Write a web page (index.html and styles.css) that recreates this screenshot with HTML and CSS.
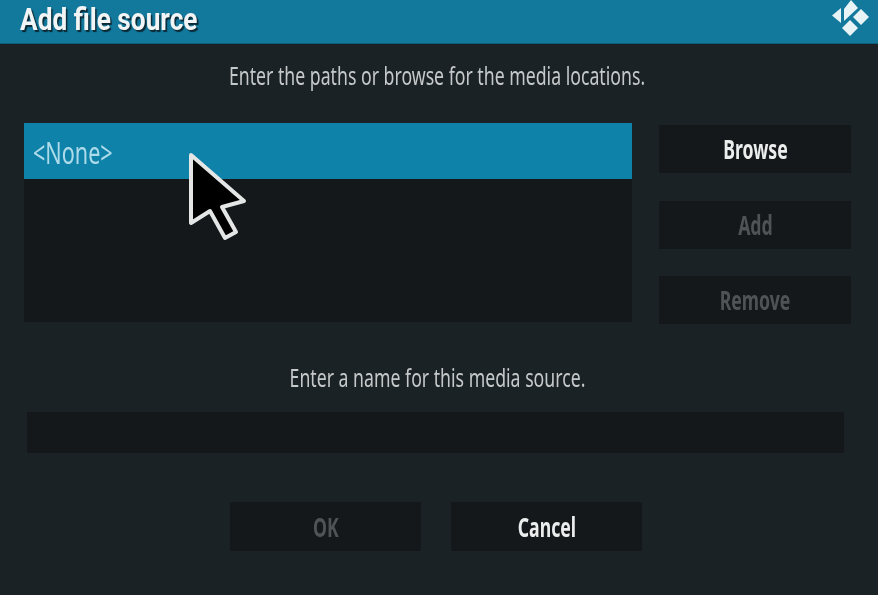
FILE: index.html
```html
<!DOCTYPE html>
<html lang="en">
<head>
    <meta charset="UTF-8">
    <meta name="viewport" content="width=device-width, initial-scale=1.0">
    <title>Add file source</title>
    <link rel="stylesheet" href="styles.css">
</head>
<body>
    <header class="title-bar">
        <h1 class="title"><span class="narrow">Add file source</span></h1>
        <svg class="logo" viewBox="0 0 40 38" width="40" height="38" aria-hidden="true">
            <polygon points="11,8 11,23 2,15.5" fill="#e8f3f6"/>
            <polygon points="14,9 21,0 28,8 14,21" fill="#e8f3f6"/>
            <polygon points="31,9 39,17 31,25 23,17" fill="#e8f3f6"/>
            <polygon points="20,20 28,28 20,36 12,28" fill="#e8f3f6"/>
        </svg>
    </header>

    <p class="hint hint-top"><span class="narrow">Enter the paths or browse for the media locations.</span></p>

    <div class="source-row">
        <div class="path-list">
            <div class="path-item"><span class="narrow">&lt;None&gt;</span></div>
        </div>
        <div class="side-buttons">
            <div class="btn"><span class="narrow">Browse</span></div>
            <div class="btn off"><span class="narrow">Add</span></div>
            <div class="btn off"><span class="narrow">Remove</span></div>
        </div>
    </div>

    <p class="hint hint-name"><span class="narrow">Enter a name for this media source.</span></p>
    <div class="name-input"></div>

    <div class="actions">
        <div class="btn off"><span class="narrow">OK</span></div>
        <div class="btn"><span class="narrow">Cancel</span></div>
    </div>

    <!-- mouse pointer sits over the list -->
    <svg class="pointer" viewBox="0 0 60 90" width="60" height="90" aria-hidden="true">
        <polygon points="2,3 55,49 33,55 47,80 36,86 21,59 2,71" fill="#000" stroke="#e4e6e6" stroke-width="4" stroke-linejoin="round"/>
    </svg>
</body>
</html>
```

FILE: styles.css
```css
html, body {
    height: 100%;
}
body {
    margin: 0;
    padding: 0;
    overflow: hidden;
    position: relative;
    background-color: #1b2225;
    color: #d4d6d7;
    font-family: "Noto Sans", "Open Sans", sans-serif;
}
.narrow {
    display: inline-block;
    white-space: nowrap;
    transform: scaleX(0.68);
    filter: blur(0.5px);
}
.title-bar {
    height: 44px;
    box-sizing: border-box;
    display: flex;
    align-items: flex-start;
    justify-content: space-between;
    padding: 0 8px 0 20px;
    background-color: #12789c;
    border-bottom: 1px solid #0f5e78;
}
.title {
    margin: 0;
    font-family: Roboto, "Noto Sans", sans-serif;
    font-size: 32px;
    line-height: 38px;
    font-weight: 700;
    color: #f2f5f5;
    text-shadow: 2px 2px 1px #0b2a36;
}
.title .narrow {
    transform: scaleX(0.82);
    transform-origin: left center;
}
.logo {
    flex: none;
}
.hint {
    margin: 0;
    padding-right: 3px;
    text-align: center;
    font-size: 26px;
    line-height: 30px;
    color: #c6c9ca;
}
.hint-top {
    padding-top: 16px;
}
.source-row {
    display: flex;
    align-items: flex-start;
    gap: 27px;
    margin: 33px 27px 0 24px;
}
.path-list {
    flex: none;
    width: 608px;
    height: 199px;
    background-color: #14181a;
}
.path-item {
    height: 56px;
    box-sizing: border-box;
    display: flex;
    align-items: center;
    padding: 3px 0 0 9px;
    background-color: #0f82aa;
    color: #aedbe9;
    font-size: 30px;
}
.path-item .narrow {
    transform: scaleX(0.72);
    transform-origin: left center;
}
.side-buttons {
    width: 192px;
    display: flex;
    flex-direction: column;
    gap: 27.5px;
    padding-top: 2px;
}
.btn {
    width: 192px;
    height: 48px;
    display: flex;
    align-items: center;
    justify-content: center;
    background-color: #14181a;
    color: #eceeee;
    font-size: 26px;
    font-weight: 700;
}
.btn.off {
    color: #4f5355;
}
.hint-name {
    padding-top: 38px;
}
.name-input {
    height: 41px;
    margin: 20px 34px 0 27px;
    background-color: #14181a;
}
.actions {
    display: flex;
    justify-content: center;
    gap: 30px;
    margin-top: 49px;
    padding-right: 6px;
}
.actions .btn {
    width: 191px;
    height: 49px;
}
.pointer {
    position: absolute;
    left: 189px;
    top: 152px;
}
```
